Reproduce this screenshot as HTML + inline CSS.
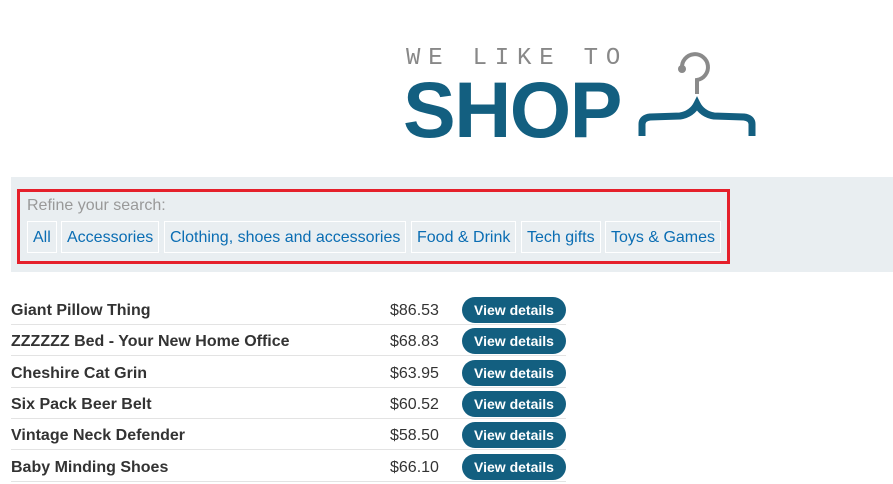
<!DOCTYPE html>
<html><head><meta charset="utf-8"><style>
*{box-sizing:border-box;margin:0;padding:0}
body{width:893px;height:484px;background:#fff;font-family:"Liberation Sans",sans-serif;position:relative;overflow:hidden}
.we{position:absolute;left:406px;top:45px;font-family:"Liberation Mono",monospace;font-size:24px;color:#888;letter-spacing:7.8px;white-space:nowrap}
.shop{position:absolute;left:403px;top:70px;font-size:79px;font-weight:bold;color:#135f80;letter-spacing:-1.5px;line-height:1}
.panel{position:absolute;left:11px;top:177px;width:882px;height:95px;background:#e9eef1}
.red{position:absolute;left:17px;top:189px;width:713px;height:75px;border:3px solid #e5202b}
.ref{position:absolute;left:27px;top:197px;font-size:16px;color:#999}
.f{position:absolute;top:221px;height:32px;border:1px solid #fff;color:#0a6db3;font-size:16px;line-height:31px;padding:0 5px;white-space:nowrap}
.row{position:absolute;left:11px;width:555px;height:31px;border-bottom:1px solid #e3e3e3}
.n{position:absolute;left:0;top:8px;font-size:16px;font-weight:bold;color:#333}
.p{position:absolute;left:379px;top:8px;font-size:16px;color:#333}
.b{position:absolute;left:451px;top:3px;width:104px;height:26px;border-radius:13px;background:#135f80;color:#fff;font-weight:bold;font-size:14px;text-align:center;line-height:26px}
</style></head><body>
<div class="we">WE LIKE TO</div>
<div class="shop">SHOP</div>
<svg style="position:absolute;left:636px;top:48px" width="124" height="92" viewBox="0 0 124 92">
<path d="M46 20 A13 13 0 1 1 61 32 L61 46" fill="none" stroke="#8a8a8a" stroke-width="4"/>
<circle cx="46" cy="21" r="4" fill="#8a8a8a"/>
<path d="M6 88 L6 76 Q6 70 14 69 L44 68 Q56 66 61 56 Q66 66 78 68 L108 69 Q116 70 116 76 L116 88" fill="none" stroke="#135f80" stroke-width="7"/>
</svg>
<div class="panel"></div>
<div class="red"></div>
<div class="ref">Refine your search:</div>
<div class="f" style="left:27px;width:30px">All</div>
<div class="f" style="left:61px">Accessories</div>
<div class="f" style="left:164px">Clothing, shoes and accessories</div>
<div class="f" style="left:411px">Food &amp; Drink</div>
<div class="f" style="left:521px">Tech gifts</div>
<div class="f" style="left:605px">Toys &amp; Games</div>
<div class="row" style="top:294px"><span class="n">Giant Pillow Thing</span><span class="p">$86.53</span><span class="b">View details</span></div>
<div class="row" style="top:325px"><span class="n">ZZZZZZ Bed - Your New Home Office</span><span class="p">$68.83</span><span class="b">View details</span></div>
<div class="row" style="top:357px"><span class="n">Cheshire Cat Grin</span><span class="p">$63.95</span><span class="b">View details</span></div>
<div class="row" style="top:388px"><span class="n">Six Pack Beer Belt</span><span class="p">$60.52</span><span class="b">View details</span></div>
<div class="row" style="top:419px"><span class="n">Vintage Neck Defender</span><span class="p">$58.50</span><span class="b">View details</span></div>
<div class="row" style="top:451px"><span class="n">Baby Minding Shoes</span><span class="p">$66.10</span><span class="b">View details</span></div>
</body></html>
